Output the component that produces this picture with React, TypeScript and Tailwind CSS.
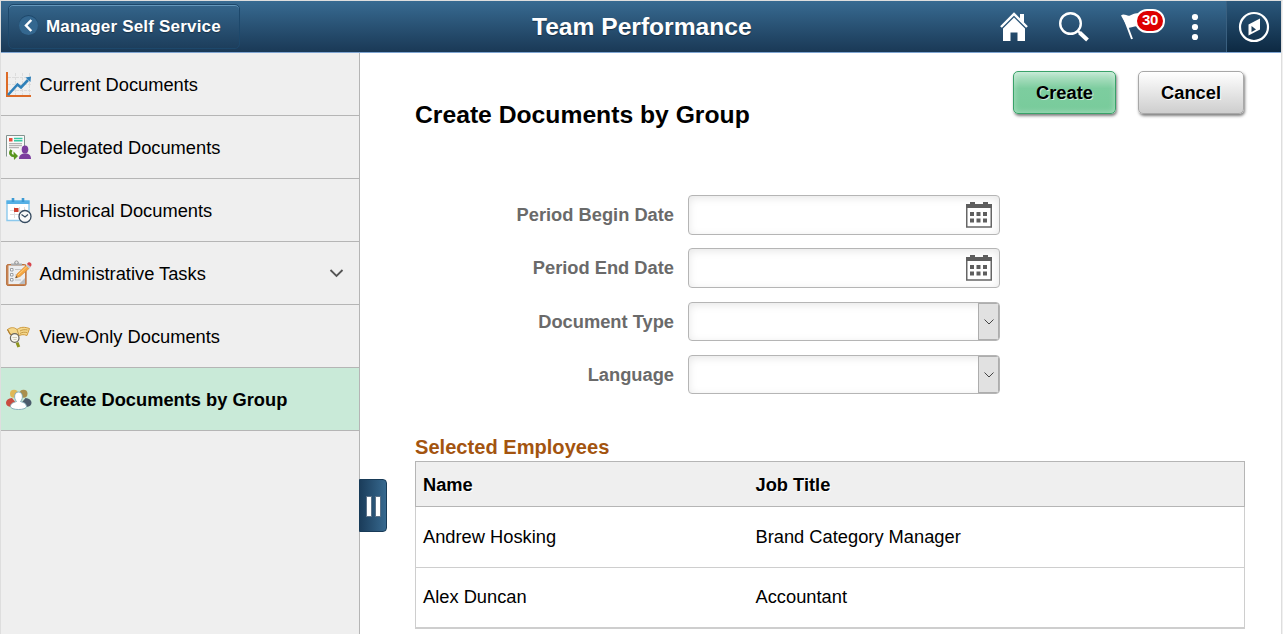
import React from 'react'

interface NavItem {
  label: string
  icon: React.ReactNode
  active?: boolean
  expandable?: boolean
}

interface Employee {
  name: string
  jobTitle: string
}

function ChartIcon() {
  return (
    <svg width="26" height="26" viewBox="0 0 26 26" fill="none">
      <path d="M9.5 1v22M16.5 1v22M23.500 1v22M2 5.500h23M2 12.500h23M2 18.500h23" stroke="#dcdcdc" strokeDasharray="3 1" />
      <path d="M1 0v24h24" stroke="#dd6b27" strokeWidth="2" />
      <path d="M2 23L11.500 12.500l3.500 3L22 8" stroke="#2f80b9" strokeWidth="2.600" />
      <path d="M25 4.500l-.5 5.500-5-4.500z" fill="#2f80b9" />
    </svg>
  )
}

function DelegateIcon() {
  return (
    <svg width="26" height="26" viewBox="0 0 26 26" fill="none">
      <path d="M.5 21V.5h18V12h-5v9z" fill="#f9f9f9" />
      <path d="M.5 21.500V.5h18V11" stroke="#83938f" />
      <path d="M3 3h3.500v3.500H3z" fill="#e64c3c" />
      <path d="M8 3.500h8.500M8 5.700h8.500" stroke="#37c9a4" strokeWidth="1.400" />
      <path d="M3 8.700h13M3 10.700h13M3 12.700h10" stroke="#b3b3b3" strokeWidth="1.300" />
      <path d="M5.500 15c-2.500 3.500-.5 6 3 6" stroke="#58951d" strokeWidth="2.600" />
      <path d="M7.500 16.500l4.500 4.500-4 4z" fill="#58951d" />
      <ellipse cx="19" cy="14.500" rx="3.300" ry="4" fill="#7b3c9e" />
      <path d="M13 24c0-4 2.500-5 4.500-5.500h3c2.500.5 4.500 1.500 4.500 5.500z" fill="#7b3c9e" />
    </svg>
  )
}

function HistoryIcon() {
  return (
    <svg width="26" height="26" viewBox="0 0 26 26" fill="none">
      <path d="M1 3h22v19.500H1z" fill="#fff" stroke="#8cc9ed" strokeWidth="1.400" />
      <path d="M.5 2.500h23V6H.5z" fill="#55b0e5" />
      <path d="M7 0v4M17 0v4" stroke="#3b9ad4" strokeWidth="2.600" />
      <path d="M8.500 9v11M13.500 9v11M18.500 9v6M4 12.500h17M4 16.500h12" stroke="#dedede" />
      <path d="M8 10h4.500v4H8z" fill="#cf3e2d" />
      <circle cx="19" cy="18.500" r="6" fill="#f7f8f9" stroke="#34495e" strokeWidth="1.300" />
      <path d="M15.500 16.500l3.500 2.500 3-2.500" stroke="#34495e" strokeWidth="1.200" />
    </svg>
  )
}

function ClipboardIcon() {
  return (
    <svg width="26" height="28" viewBox="0 0 26 28" fill="none">
      <rect x=".6" y="4.500" width="19.500" height="21" rx="1.500" fill="#c98755" stroke="#b8703f" />
      <path d="M2.500 5.500h16.500v18.500H2.500z" fill="#eceef0" />
      <path d="M13 24l6-6v6z" fill="#b9bec4" />
      <path d="M5 5.500h11V3.500h-3C13 .5 8 .5 8 3.500H5z" fill="#a9adb0" />
      <circle cx="10.500" cy="2.500" r="1.600" fill="#e9e9e9" stroke="#999" />
      <path
        d="M4.500 8.500h2.500v2.500H4.500zM4.500 13.500h2.500v2.500H4.500zM4.500 18.500h2.500v2.500H4.500z"
        fill="#fff"
        stroke="#868b90"
        strokeWidth=".8"
      />
      <path d="M9 9.500h6M9 15h3M9 20h6" stroke="#c3c7ca" />
      <path d="M9.500 18l1.500-4L20 5.500l3 3-9 8z" fill="#f5a742" stroke="#d4832b" strokeWidth=".6" />
      <path d="M12 15l9-8.500" stroke="#ffd07c" />
      <path d="M20 5.500l1.600-1.700 3.200 3.200L23 8.500z" fill="#c2c8ce" />
      <path d="M21 4c1-2 2.800-2 3.800-1 .9.900 1 2.400-.2 3.700z" fill="#d8454b" />
      <path d="M9.500 18l.7-2 1.400 1.300z" fill="#444" />
    </svg>
  )
}

function BookSearchIcon() {
  return (
    <svg width="26" height="24" viewBox="0 0 26 24" fill="none" className="mt-[2px]">
      <path d="M1.500 3.500C5 1 8 1 11 3.500c4-3 8-2.500 12.500-1L21 9.500c-3.500-1.500-6.500-1-9.500 1L4 8z" fill="#f5d88c" stroke="#cf9b40" />
      <path d="M11 3.500l2 6M14 5c2.500-1.500 5-1.500 7.500-1M14 7.500c2.500-1.500 4.500-1.500 7-1" stroke="#b98a35" strokeWidth=".8" />
      <path d="M1.500 3.500L4 8l7 2.500 1.500-1" stroke="#b07f30" strokeWidth="1.200" />
      <circle cx="8.700" cy="12" r="4.300" fill="#f8f7ef" stroke="#6b675e" strokeWidth="1.200" />
      <path d="M6.500 11.500h4.500M7.500 13.500h3" stroke="#d3cdb8" />
      <path d="M11 16.500l1.800 4.500" stroke="#8e941e" strokeWidth="3" />
    </svg>
  )
}

function GroupIcon() {
  return (
    <svg width="26" height="22" viewBox="0 0 26 22" fill="none">
      <circle cx="8" cy="4.700" r="4" fill="#dfb857" />
      <circle cx="17.500" cy="4.700" r="4" fill="#a98f4e" />
      <path d="M0 14c0-3 2.500-4.500 6-5l5 6-6 3C2 17.500 0 16.500 0 14z" fill="#c94b40" />
      <path d="M25.500 14c0-3-2.500-4.500-6-5l-5 6 6 3c3-.5 5-1.500 5-4z" fill="#4b5c6c" />
      <path d="M4.500 17.500c0-3.500 3.500-4 6-5-3-3-2.500-9.500 2-9.500s5 6.500 2 9.500c2.500 1 6 1.500 6 5 0 4-16 4-16 0z" fill="#fff" stroke="#7da9b8" strokeWidth=".9" />
    </svg>
  )
}

function CalendarIcon() {
  return (
    <svg width="26" height="26" viewBox="0 0 26 26" fill="none">
      <path d="M.75 4h24.500v21H.75z" fill="#fff" stroke="#666" strokeWidth="1.500" />
      <path d="M0 2h4V0h5v2h8V0h5v2h4v4H0z" fill="#5e5e5e" />
      <path
        d="M4 10h4v4H4zM10.500 10h4v4h-4zM17 10h4v4h-4zM4 16.500h4v4H4zM10.500 16.500h4v4h-4zM17 16.500h4v4h-4z"
        fill="#5e5e5e"
      />
    </svg>
  )
}

const navItems: NavItem[] = [
  { label: 'Current Documents', icon: <ChartIcon /> },
  { label: 'Delegated Documents', icon: <DelegateIcon /> },
  { label: 'Historical Documents', icon: <HistoryIcon /> },
  { label: 'Administrative Tasks', icon: <ClipboardIcon />, expandable: true },
  { label: 'View-Only Documents', icon: <BookSearchIcon /> },
  { label: 'Create Documents by Group', icon: <GroupIcon />, active: true },
]

const employees: Employee[] = [
  { name: 'Andrew Hosking', jobTitle: 'Brand Category Manager' },
  { name: 'Alex Duncan', jobTitle: 'Accountant' },
]

function Header() {
  return (
    <header className="relative flex h-[52px] shrink-0 items-center justify-between border-b border-[#7fa5d2] bg-linear-to-b from-[#386b92] to-[#1a3956] text-white">
      <button className="mb-[1px] ml-[7px] flex h-[45px] w-[232px] items-center rounded-[5px] border border-[#1d486b] bg-linear-to-b from-[#34658b] to-[#1d3e5c] pl-[10px] shadow-[inset_0_1px_0_#6598bd]">
        <span className="-mt-px flex size-[19px] items-center justify-center rounded-full bg-[#34678f] shadow-[0_-1px_0_#1d486b]">
          <svg width="9" height="13" viewBox="0 0 9 13" fill="none">
            <path d="M7.300 1L2 6.500 7.300 12" stroke="#fff" strokeWidth="2.500" />
          </svg>
        </span>
        <span className="mt-[1px] ml-[8px] text-[17px] font-bold tracking-[0.19px] [text-shadow:0_1px_1px_#0005]">
          Manager Self Service
        </span>
      </button>

      <h1 className="absolute left-[531px] mt-px text-[24.6px] font-bold whitespace-nowrap [text-shadow:0_1px_1px_#0006]">
        Team Performance
      </h1>

      <div className="flex h-full items-center">
        <svg width="28" height="29" viewBox="0 0 28 29" fill="none" className="mr-[31px]">
          <path d="M1 15L14 2l13 13" stroke="#fff" strokeWidth="2.400" />
          <path d="M20 2h4v9l-4-4z" fill="#fff" />
          <path d="M14 5.500l11 11V29h-7.500v-8.500h-7V29H3V16.500z" fill="#fff" />
        </svg>
        <svg width="30" height="30" viewBox="0 0 30 30" fill="none" className="mr-[32px]">
          <circle cx="11.500" cy="11.500" r="10.300" stroke="#fff" strokeWidth="2.400" />
          <path d="M18.500 18.500l3 3" stroke="#fff" strokeWidth="2.400" />
          <path d="M20.500 20.500l8 7.500" stroke="#fff" strokeWidth="4" />
        </svg>
        <div className="relative mr-[26px] h-[30px] w-[44px]">
          <svg width="20" height="27" viewBox="0 0 20 27" fill="none" className="mt-[1px]">
            <path d="M0 2.500c3-2.500 6 1 9 0s5-3 9-2v13c-4-1-6 .5-11 1.500z" fill="#fff" />
            <path d="M3.500 6L11 26" stroke="#fff" strokeWidth="2" />
          </svg>
          <span className="absolute -top-[3px] left-[14px] flex h-[24px] w-[30px] items-center justify-center rounded-full border-2 border-white bg-[#dd0000] text-[15px] font-bold tracking-[-0.3px]">
            30
          </span>
        </div>
        <svg width="8" height="28" viewBox="0 0 8 28" fill="#fff" className="mr-[27px]">
          <circle cx="4" cy="4" r="3.100" />
          <circle cx="4" cy="14" r="3.100" />
          <circle cx="4" cy="24" r="3.100" />
        </svg>
        <div className="flex h-full w-[55px] items-center justify-center border-l border-[#3a6080] bg-linear-to-b from-[#2b587c] to-[#0d2942]">
          <svg width="32" height="32" viewBox="0 0 32 32" fill="none">
            <circle cx="16" cy="16" r="14" stroke="#fff" strokeWidth="2.200" />
            <path d="M10.500 13.500L22 7.500v11l-11.500 6z" fill="#fff" />
            <path d="M13.500 15l4.500 3.500-4.500 2.500z" fill="#1c3d59" />
          </svg>
        </div>
      </div>
    </header>
  )
}

function Sidebar() {
  return (
    <nav className="w-[359px] shrink-0 border-r border-[#b5b5b5] bg-[#efefef]">
      {navItems.map((item) => (
        <a
          key={item.label}
          className={
            item.active
              ? 'flex h-[63px] items-center border-b border-[#b5b5b5] bg-[#c9ead8] pt-[2px] pr-[15px] pl-[5px] text-[18.3px] font-bold'
              : 'flex h-[63px] items-center border-b border-[#b5b5b5] pt-[2px] pr-[15px] pl-[5px] text-[18.3px]'
          }
        >
          <span className="flex w-[33.5px] shrink-0">{item.icon}</span>
          <span className="flex-1">{item.label}</span>
          {item.expandable && (
            <svg width="15" height="9" viewBox="0 0 15 9" fill="none" className="-mt-px">
              <path d="M1.500 1l6 6 6-6" stroke="#555" strokeWidth="1.800" />
            </svg>
          )}
        </a>
      ))}
    </nav>
  )
}

interface FieldProps {
  label: string
  type: 'date' | 'select'
}

function Field({ label, type }: FieldProps) {
  return (
    <div className="flex items-center">
      <label className="w-[259px] text-right text-[18.3px] font-bold text-[#6a6a6a]">{label}</label>
      {type === 'date' ? (
        <div className="ml-[14px] flex h-[40px] w-[312px] items-center justify-end rounded-[4px] border border-[#b5b5b5] bg-white pr-[7px] shadow-[inset_0_2px_8px_#0000001a]">
          <CalendarIcon />
        </div>
      ) : (
        <div className="ml-[14px] flex h-[39px] w-[312px] justify-end overflow-hidden rounded-[4px] border border-[#b5b5b5] bg-white shadow-[inset_0_2px_8px_#0000001a]">
          <span className="flex w-[21px] items-center justify-center border border-[#adadad] bg-[#e1e1e1]">
            <svg width="10" height="6" viewBox="0 0 10 6" fill="none">
              <path d="M.5.5L5 5 9.500.5" stroke="#444" />
            </svg>
          </span>
        </div>
      )}
    </div>
  )
}

export default function App() {
  return (
    <div className="flex h-[634px] w-[1283px] flex-col overflow-hidden border-t border-r border-l border-t-[#dedede] border-r-[#f0f0f0] border-l-[#dedede] bg-white font-['Liberation_Sans',Arial,sans-serif] text-black">
      <div className="flex min-h-0 flex-1 flex-col border-r border-[#dedede]">
        <Header />
        <div className="flex min-h-0 flex-1">
          <Sidebar />
          <main className="relative flex-1 pl-[55px]">
            <div className="absolute top-[426px] -left-px flex h-[53px] w-[28px] items-center justify-center gap-[3px] rounded-r-[4px] border border-[#183b58] bg-linear-to-r from-[#1b3d5b] to-[#37698f] pt-[2px]">
              <span className="h-[21px] w-[6px] border border-[#5c7288] bg-white" />
              <span className="h-[21px] w-[6px] border border-[#5c7288] bg-white" />
            </div>

            <div className="flex h-[142px] w-[830px] items-start pt-[18px]">
              <h2 className="mt-[28px] flex-1 text-[24.7px] leading-[32px] font-bold">Create Documents by Group</h2>
              <button className="h-[43px] w-[103px] rounded-[5px] border border-[#39a269] bg-linear-to-b from-[#bde6cf] via-[#7dcd9f] via-40% to-[#78cb9b] text-[18.3px] font-bold shadow-[1px_2px_3px_#00000080,inset_0_0_6px_#ffffff66] [text-shadow:1px_1px_0_#ffffff99]">
                Create
              </button>
              <button className="mr-px ml-[22px] h-[43px] w-[106px] rounded-[5px] border border-[#a8a8a8] bg-linear-to-b from-white to-[#cecece] text-[18.3px] font-bold shadow-[1px_2px_3px_#00000080] [text-shadow:1px_1px_0_#ffffff]">
                Cancel
              </button>
            </div>

            <div className="flex flex-col">
              <Field label="Period Begin Date" type="date" />
              <div className="h-[13px]" />
              <Field label="Period End Date" type="date" />
              <div className="h-[14px]" />
              <Field label="Document Type" type="select" />
              <div className="h-[14px]" />
              <Field label="Language" type="select" />
            </div>

            <h3 className="mt-[39px] text-[20.1px] leading-[28px] font-bold text-[#a3540f]">Selected Employees</h3>
            <div className="w-[830px] border-b-2 border-[#cecece] text-[18.3px]">
              <div className="flex h-[46px] items-center border border-[#b5b5b5] bg-[#efefef] pt-[2px] pl-[7px] font-bold [text-shadow:1px_1px_0_#fff]">
                <span className="w-[332.5px]">Name</span>
                <span>Job Title</span>
              </div>
              {employees.map((employee, i) => (
                <div
                  key={employee.name}
                  className={
                    i === 0
                      ? 'flex h-[61px] items-center border-x border-b border-[#cecece] pl-[7px]'
                      : 'flex h-[59px] items-center border-x border-[#cecece] pb-px pl-[7px]'
                  }
                >
                  <span className="w-[332.5px]">{employee.name}</span>
                  <span>{employee.jobTitle}</span>
                </div>
              ))}
            </div>
          </main>
        </div>
      </div>
    </div>
  )
}
